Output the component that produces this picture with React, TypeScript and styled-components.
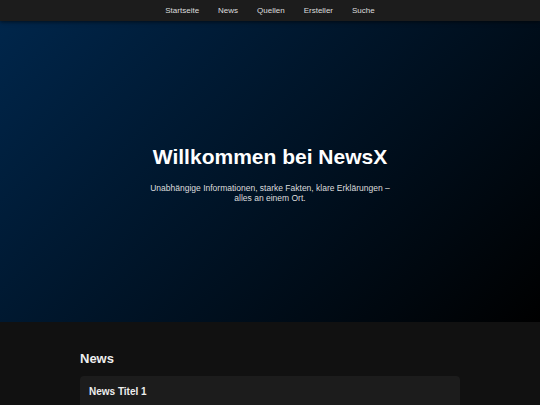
import React from 'react'
import styled, { createGlobalStyle } from 'styled-components'

const links = ['Startseite', 'News', 'Quellen', 'Ersteller', 'Suche']

export default function App() {
  return (
    <>
      <Global />
      <S.Nav>
        {links.map(l => (
          <S.Link key={l} href="#">
            {l}
          </S.Link>
        ))}
      </S.Nav>
      <S.Hero>
        <S.Title>Willkommen bei NewsX</S.Title>
        <S.Lead>
          Unabhängige Informationen, starke Fakten, klare Erklärungen – alles
          an einem Ort.
        </S.Lead>
      </S.Hero>
      <S.Section>
        <S.SectionTitle>News</S.SectionTitle>
        <S.Card>
          <S.CardTitle>News Titel 1</S.CardTitle>
        </S.Card>
      </S.Section>
    </>
  )
}

const Global = createGlobalStyle`
  html, body {
    margin: 0;
    padding: 0;
    background: #111;
    color: #fff;
    font-family: "Liberation Sans", Arial, sans-serif;
    overflow: hidden;
  }
  * { box-sizing: border-box; }
`

const S = {
  Nav: styled.nav`
    height: 21px;
    background: #1c1c1c;
    display: flex;
    justify-content: center;
    align-items: center;
    gap: 19px;
    position: relative;
    z-index: 1;
    box-shadow: 0 1px 4px rgba(0, 0, 0, 0.6);
  `,

  Link: styled.a`
    color: #ddd;
    text-decoration: none;
    font-size: 8px;
  `,

  Hero: styled.header`
    height: 301px;
    padding-top: 5px;
    background: linear-gradient(135deg, #00264b 0%, #000 100%);
    display: flex;
    flex-direction: column;
    align-items: center;
    justify-content: center;
    text-align: center;
  `,

  Title: styled.h1`
    margin: 0 0 14px;
    font-size: 21px;
    font-weight: bold;
    color: #fff;
  `,

  Lead: styled.p`
    margin: 0;
    max-width: 245px;
    font-size: 8.5px;
    line-height: 10px;
    color: #ddd;
  `,

  Section: styled.section`
    width: 380px;
    margin: 0 auto;
    padding: 29px 0 0;
  `,

  SectionTitle: styled.h2`
    margin: 0 0 10px;
    font-size: 13px;
    font-weight: bold;
    color: #eee;
  `,

  Card: styled.div`
    background: #1c1c1c;
    border-radius: 4px;
    padding: 10px 9px;
    height: 60px;
  `,

  CardTitle: styled.h3`
    margin: 0;
    font-size: 10px;
    font-weight: bold;
    color: #eee;
  `,
}
